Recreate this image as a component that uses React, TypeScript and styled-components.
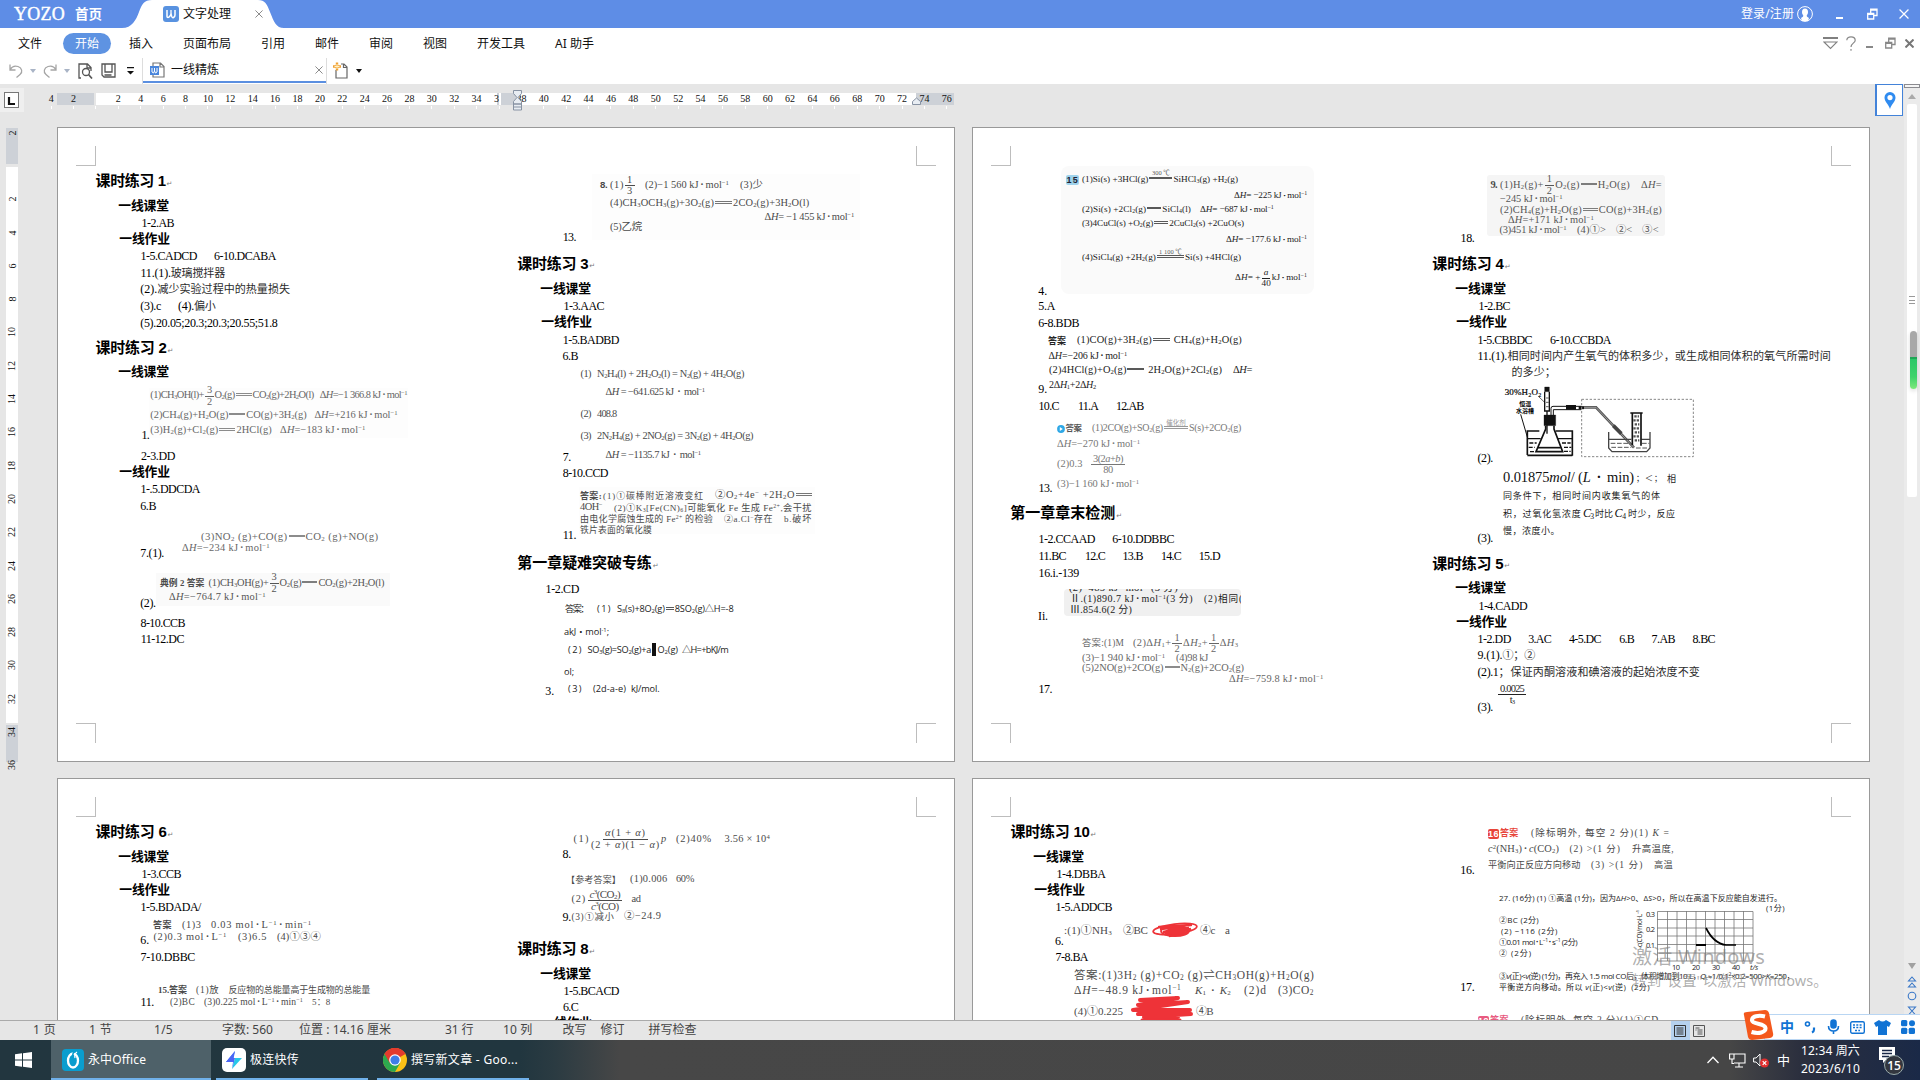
import React, { useLayoutEffect, useRef } from "react";
import styled, { createGlobalStyle, css } from "styled-components";

const SERIF = `"Liberation Serif", "Noto Sans CJK SC", serif`;
const SANS = `"Liberation Sans", "Noto Sans CJK SC", sans-serif`;
const UI = `"Noto Sans", "Noto Sans CJK SC", sans-serif`;

const Global = createGlobalStyle`
  * { box-sizing: border-box; }
  body { margin: 0; background: #e6e6e6; overflow: hidden; font-family: ${UI}; }
  svg { display: block; flex: none; }
`;

/* ---------- text set to a measured width ---------- */

const FitBox = styled.span<{ $w?: number }>`
  display: block;
  flex: none;
  white-space: pre;
  width: ${(p) => (p.$w ? `${p.$w}px` : "auto")};
`;

function Fit({ w, children, className }: { w?: number; children: React.ReactNode; className?: string }) {
  const ref = useRef<HTMLSpanElement>(null);
  useLayoutEffect(() => {
    const el = ref.current;
    if (!el || !w) return;
    el.style.letterSpacing = "0px";
    const base = el.getBoundingClientRect().width;
    el.style.letterSpacing = "1px";
    const slope = el.getBoundingClientRect().width - base;
    el.style.letterSpacing = slope > 0 ? `${(w - base) / slope}px` : "0px";
  }, [w]);
  return (
    <FitBox $w={w} className={className}>
      <span ref={ref}>{children}</span>
    </FitBox>
  );
}

/* ---------- formula markup: _x, ^{x}, *italic*, [num|den], ~width:label~ ---------- */

const Sub = styled.span`
  font-size: 0.64em;
  line-height: 0;
  vertical-align: -0.2em;
`;
const Sup = styled.span`
  font-size: 0.64em;
  line-height: 0;
  vertical-align: 0.5em;
`;
const Dot = styled.span`
  padding: 0 0.16em;
  font-weight: 700;
`;
const Han = styled.span`
  font-size: 0.92em;
  color: #2c2c2c;
`;
const Frac = styled.span`
  display: inline-flex;
  flex-direction: column;
  align-items: center;
  vertical-align: middle;
  line-height: 1em;
  margin: -10px 1px;
`;
const Num = styled.span`
  border-bottom: 1px solid currentColor;
  padding: 0 2px;
`;
const Bond = styled.span<{ $w: number }>`
  display: inline-block;
  position: relative;
  width: ${(p) => p.$w}px;
  height: 2.5px;
  margin: 0 1px;
  vertical-align: 2.5px;
  border-top: 1px solid currentColor;
  border-bottom: 1px solid currentColor;
  opacity: 0.75;
`;
const BondLabel = styled.span`
  position: absolute;
  left: 0;
  right: 0;
  bottom: 2px;
  text-align: center;
  font-size: 6.5px;
  line-height: 7px;
  letter-spacing: 0;
`;

function mark(src: string): React.ReactNode[] {
  const re = /_(.)|\^\{([^}]+)\}|\*([^*]+)\*|\[([^\]|]+)\|([^\]]+)\]|~(\d+)(?::([^~]*))?~|(·)/g;
  const out: React.ReactNode[] = [];
  let last = 0;
  let m: RegExpExecArray | null;
  while ((m = re.exec(src))) {
    if (m.index > last) out.push(src.slice(last, m.index));
    const k = m.index;
    if (m[1]) out.push(<Sub key={k}>{m[1]}</Sub>);
    else if (m[2]) out.push(<Sup key={k}>{m[2]}</Sup>);
    else if (m[3]) out.push(<i key={k}>{m[3]}</i>);
    else if (m[4])
      out.push(
        <Frac key={k}>
          <Num>{mark(m[4])}</Num>
          <span>{mark(m[5])}</span>
        </Frac>
      );
    else if (m[8]) out.push(<Dot key={k}>·</Dot>);
    else
      out.push(
        <Bond key={k} $w={+m[6]}>
          {m[7] ? <BondLabel>{m[7]}</BondLabel> : null}
        </Bond>
      );
    last = m.index + m[0].length;
  }
  if (last < src.length) out.push(src.slice(last));
  return out;
}

const bodyText = (src: string) =>
  src.split(/([\u2460-\u2473\u4e00-\u9fff，；]+)/).map((part, i) => (i % 2 ? <Han key={i}>{part}</Han> : part));

/* ---------- document lines ---------- */

type Style = { s?: number; c?: string; b?: boolean; f?: string; bg?: string; it?: boolean };
type TextItem = Style & { k: "t"; x: number; x2: number; text: string; body?: boolean };
type ScanItem = { k: "s"; x: number; x2: number; y: number; y2: number; bg?: string; r?: number; clip?: boolean; rows: LineDef[] };
type NodeItem = { k: "n"; x: number; x2: number; bottom: number; node: React.ReactNode };
type Item = TextItem | ScanItem | NodeItem;
type LineDef = { y: number; items: Item[] };

const Stack = styled.div`
  display: flex;
  flex-direction: column;
  min-width: 0;
`;
const Line = styled.div<{ $h: number }>`
  display: flex;
  flex: none;
  align-items: flex-end;
  height: ${(p) => p.$h}px;
`;
const Slot = styled.div<{ $ml: number; $w: number; $mb: number }>`
  flex: none;
  width: ${(p) => p.$w}px;
  margin-left: ${(p) => p.$ml}px;
  margin-bottom: ${(p) => p.$mb}px;
`;
const Ink = styled(Fit)<{ $s: number; $c: string; $b?: boolean; $f: string; $bg?: string; $it?: boolean }>`
  font: ${(p) => (p.$it ? "italic " : "")}${(p) => (p.$b ? 700 : 400)} ${(p) => p.$s}px/16px ${(p) => p.$f};
  color: ${(p) => p.$c};
  ${(p) =>
    p.$bg &&
    css`
      background: ${p.$bg};
      border-radius: 2px;
      line-height: ${p.$s + 1}px;
      margin-bottom: 2px;
    `}
`;
const Scan = styled.div<{ $w: number; $h: number; $bg: string; $r: number; $clip?: boolean }>`
  width: ${(p) => p.$w}px;
  height: ${(p) => p.$h}px;
  background: ${(p) => p.$bg};
  border-radius: ${(p) => p.$r}px;
  overflow: ${(p) => (p.$clip ? "hidden" : "visible")};
`;

function Lines({ x0, y0, rows }: { x0: number; y0: number; rows: LineDef[] }) {
  let prev = y0;
  return (
    <Stack>
      {rows.map((r, i) => {
        const bottom = r.y + 4;
        const h = bottom - prev;
        prev = bottom;
        let cx = x0;
        return (
          <Line key={i} $h={h}>
            {r.items.map((it, j) => {
              const ml = it.x - cx;
              const w = it.x2 - it.x;
              cx = it.x2;
              if (it.k === "t") {
                const s = it.s ?? 12;
                return (
                  <Slot key={j} $ml={ml} $w={w} $mb={s * 0.34 - 4}>
                    <Ink w={w} $s={s} $c={it.c ?? "#000"} $b={it.b} $f={it.f ?? SERIF} $bg={it.bg} $it={it.it}>
                      {it.body ? bodyText(it.text) : mark(it.text)}
                    </Ink>
                  </Slot>
                );
              }
              if (it.k === "s")
                return (
                  <Slot key={j} $ml={ml} $w={w} $mb={bottom - it.y2}>
                    <Scan $w={w} $h={it.y2 - it.y} $bg={it.bg ?? "transparent"} $r={it.r ?? 0} $clip={it.clip}>
                      <Lines x0={it.x} y0={it.y} rows={it.rows} />
                    </Scan>
                  </Slot>
                );
              return (
                <Slot key={j} $ml={ml} $w={w} $mb={bottom - it.bottom}>
                  {it.node}
                </Slot>
              );
            })}
          </Line>
        );
      })}
    </Stack>
  );
}

const B = (x: number, x2: number, text: string): TextItem => ({ k: "t", x, x2, text, body: true });
const row = (y: number, ...items: Item[]): LineDef => ({ y, items });
/* scanned print */
const P = (x: number, x2: number, text: string, o: Style = {}): TextItem => ({ k: "t", x, x2, text, s: 10.4, c: "#4a4a4a", ...o });
const D = "#777";
const scan = (x: number, y: number, x2: number, y2: number, rows: LineDef[], o: Partial<ScanItem> = {}): ScanItem => ({
  k: "s", x, y, x2, y2, rows, ...o,
});
const node = (x: number, x2: number, bottom: number, n: React.ReactNode): NodeItem => ({ k: "n", x, x2, bottom, node: n });
const H1 = (x: number, y: number, text: string, w: number): LineDef =>
  row(
    y,
    { k: "t", x, x2: x + w, text, s: 15, b: true, f: SANS },
    { k: "t", x: x + w + 1, x2: x + w + 6, text: "↵", s: 7, c: "#777", f: `"DejaVu Sans", sans-serif` }
  );
const H2 = (x: number, y: number, text: string): LineDef => row(y, { k: "t", x: x - 0.8, x2: x + 50, text, s: 12.8, b: true, f: SANS });

/* ---------- drawings inside the document ---------- */

const Apparatus = () => (
  <svg width="200" height="80" viewBox="300 790 600 240" fill="none" stroke="#111">
    <text x="314" y="826" fontSize="27" fontFamily="Liberation Serif" fill="#000" stroke="#000" strokeWidth=".6" textLength="110">30%H₂O₂</text>
    <text x="358" y="859" fontSize="18" fontWeight="700" fontFamily="Noto Sans CJK SC" fill="#000" stroke="none">恒温</text>
    <text x="348" y="880" fontSize="18" fontWeight="700" fontFamily="Noto Sans CJK SC" fill="#000" stroke="none">水浴槽</text>
    <path d="M362 884L382 952" strokeWidth="3" />
    <path d="M415 830L436 850" strokeWidth="2" />
    <path d="M434 802h14v14h-14z" fill="#111" />
    <path d="M434 816v58h14v-58M441 874v68" strokeWidth="4" />
    <path d="M438 835h8M438 848h8M438 861h8" strokeWidth="2" />
    <path d="M432 886h35v32h-35z" fill="#111" />
    <path d="M437 918v10L408 996h80L462 928v-10" strokeWidth="5" />
    <path d="M414 984h68" strokeWidth="5" />
    <path d="M453 888v-22q0-6 6-6h84" strokeWidth="3" />
    <path d="M460 888v-18h84" strokeWidth="3" />
    <path d="M498 863h30" strokeWidth="14" />
    <path d="M536 864h16" strokeWidth="9" />
    <path d="M382 934h36M467 934h50M382 932v74M517 932v76M382 1007h135" strokeWidth="5" />
    <path d="M384 957h38M474 957h42" strokeWidth="4" />
    <path d="M388 970h22M486 970h26M386 983h18M492 983h22M390 996h14M492 995h20" strokeWidth="4" strokeDasharray="12 4" />
    <path d="M545 839h335v172H545z" stroke="#888" strokeWidth="3" strokeDasharray="7 5" />
    <path d="M552 863h36L702 984" stroke="#555" strokeWidth="8" />
    <path d="M552 863h36L702 984" stroke="#bbb" strokeWidth="2" />
    <path d="M640 918l24 24" stroke="#444" strokeWidth="11" />
    <path d="M626 937v48l10 11h104l10-11v-48M626 959h68M724 959h25" stroke="#444" strokeWidth="4" />
    <path d="M632 971h60M726 971h22M634 983h60M708 985h36" stroke="#555" strokeWidth="3" strokeDasharray="14 5" />
    <path d="M691 880h37M697 880v96M723 880v98" strokeWidth="5" />
    <path d="M703 890h14M700 902h18M704 914h14M700 926h18M704 938h14M700 950h18M704 962h14" stroke="#555" strokeWidth="7" strokeDasharray="7 3" />
  </svg>
);

const Scribble = ({ tall }: { tall?: boolean }) =>
  tall ? (
    <svg width="64" height="24" viewBox="0 0 64 24" fill="none" stroke="#ee3338" strokeWidth="4" strokeLinecap="round" strokeLinejoin="round">
      <path d="M10 4L48 2L8 9L58 6L3 14L60 14L8 18L61 18L14 21L48 21" />
      <path d="M12 24h38" strokeWidth="3" />
    </svg>
  ) : (
    <svg width="48" height="18" viewBox="0 0 48 18" fill="none" stroke="#ee3338" strokeWidth="1.800" strokeLinecap="round">
      <ellipse cx="24" cy="8" rx="22" ry="5" transform="rotate(-7 24 8)" />
      <path d="M10 8L34 5L12 11L38 7L14 13L40 8L18 15L36 12M8 6L40 4" strokeWidth="2.300" />
      <ellipse cx="24" cy="10" rx="14" ry="5" />
    </svg>
  );

const Chart = () => (
  <svg width="104" height="62" viewBox="1649 909 104 62" fill="none">
    <path d="M1657.500 911.500H1753V961H1657.500zM1667.500 911v50M1677 911v50M1686.500 911v50M1696 911v50M1705.500 911v50M1715 911v50M1724.500 911v50M1734 911v50M1743.500 911v50M1657 919.500h96M1657 928h96M1657 936h96M1657 944.500h96M1657 953h96" stroke="#777" strokeWidth=".8" />
    <path d="M1696 945h10" stroke="#000" strokeWidth="2" />
    <path d="M1706 928c4 8 11 16 20 17h10" stroke="#000" strokeWidth="1.700" />
    <g fontFamily="Open Sans" fontSize="7.500" fill="#222">
      <text x="1646" y="917" textLength="9">0.3</text>
      <text x="1646" y="932" textLength="9">0.2</text>
      <text x="1646" y="948" textLength="9">0.1</text>
      <text x="1672" y="969.500" textLength="8">10</text>
      <text x="1692" y="969.500" textLength="8">20</text>
      <text x="1712" y="969.500" textLength="8">30</text>
      <text x="1732" y="969.500" textLength="8">40</text>
      <text x="1750" y="969.500" fontStyle="italic">t/s</text>
      <text transform="translate(1642 947) rotate(-90)" fontSize="6.500" textLength="37">c(CO)/mol·L⁻¹</text>
    </g>
  </svg>
);
const ChartBox = styled.div`
  svg { overflow: visible; }
`;
const PlayDot = () => (
  <svg width="8" height="8" viewBox="0 0 8 8">
    <circle cx="4" cy="4" r="3.900" fill="#2fa8e6" />
    <path d="M2.800 2l3 2-3 2z" fill="#fff" />
  </svg>
);
const CursorBlock = styled.div`
  width: 4px;
  height: 13px;
  background: #111;
`;

/* ---------- page contents ---------- */

const SM = { f: `"Open Sans", "Noto Sans CJK SC", sans-serif`, s: 8, c: "#222" };
const HAND = { f: `"Open Sans", "Noto Sans CJK SC", sans-serif`, s: 9.2, c: "#222" };
const KAI = { s: 9, c: "#222", f: SANS };
const RED = "#e8443a";
const INK = { s: 9.2, c: "#222" };

const p1a = [
  H1(95.6, 186, "课时练习 1", 70),
  H2(119, 210.5, "一线课堂"),
  row(227, B(141.5, 174, "1-2.AB")),
  H2(120, 243.5, "一线作业"),
  row(260, B(140.5, 197, "1-5.CADCD"), B(214, 276, "6-10.DCABA")),
  row(277, B(140.5, 225, "11.(1).玻璃搅拌器")),
  row(293.5, B(140.3, 290, "(2).减少实验过程中的热量损失")),
  row(310, B(140.3, 161, "(3).c"), B(178, 215.5, "(4).偏小")),
  row(327, B(140.3, 277.5, "(5).20.05;20.3;20.3;20.55;51.8")),
  H1(95.6, 353.5, "课时练习 2", 71),
  H2(119, 376.5, "一线课堂"),
  row(
    439,
    B(141.5, 149, "1."),
    scan(149, 388, 408, 438, [
      row(399, P(150.3, 407, "(1)CH_3OH(l)+[3|2]O_2(g)~16~CO_2(g)+2H_2O(l)   Δ*H*=−1 366.8 kJ·mol^{−1}", { c: "#666" })),
      row(418.5, P(150.3, 397.5, "(2)CH_4(g)+H_2O(g)~16~CO(g)+3H_2(g)   Δ*H*=+216 kJ·mol^{−1}", { c: "#666" })),
      row(433.7, P(150.3, 365.5, "(3)H_2(g)+Cl_2(g)~16~2HCl(g)   Δ*H*=−183 kJ·mol^{−1}", { c: "#666" })),
    ], { bg: "#fdfdfd" })
  ),
  row(460, B(141, 175, "2-3.DD")),
  H2(120, 476.5, "一线作业"),
  row(493, B(140.5, 200, "1-.5.DDCDA")),
  row(510, B(140.3, 156, "6.B")),
  row(
    557,
    B(140.3, 164, "7.(1)."),
    scan(182, 525, 386, 556, [
      row(539.3, P(201, 378.5, "(3)NO_2 (g)+CO(g)~16~CO_2 (g)+NO(g)", { c: "#666", s: 10.800 })),
      row(551.3, P(182, 270, "Δ*H*=−234 kJ·mol^{−1}", { c: "#666" })),
    ])
  ),
  row(
    607,
    B(140.3, 155.5, "(2)."),
    scan(156, 573, 390, 606, [
      row(586.3, P(160, 204.500, "典例 2 答案", { b: true, s: 8.800 }), P(208.5, 384.3, "(1)CH_3OH(g)+[3|2]O_2(g)~15~CO_2(g)+2H_2O(l)", { c: "#555" })),
      row(601, P(169, 266, "Δ*H*=−764.7 kJ·mol^{−1}", { c: "#555" })),
    ], { bg: "#fafafa" })
  ),
  row(627, B(140.5, 185, "8-10.CCB")),
  row(643, B(140.8, 184, "11-12.DC")),
];

const p1b = [
  row(
    240.7,
    B(562.7, 576, "13."),
    scan(592, 174, 860, 240, [
      row(188.7, P(600, 607.5, "8.", { b: true, f: SANS, s: 9.600 }), P(610, 636, "(1)[1|3]"), P(645, 729, "(2)−1 560 kJ·mol^{−1}"), P(740, 763, "(3)少")),
      row(206.7, P(610, 809.5, "(4)CH_3OCH_3(g)+3O_2(g)~17~2CO_2(g)+3H_2O(l)")),
      row(220.3, P(764.5, 854, "Δ*H*= −1 455 kJ·mol^{−1}")),
      row(230.7, P(610, 642, "(5)乙烷")),
    ], { bg: "#fdfdfd" })
  ),
  H1(517.3, 268.7, "课时练习 3", 71),
  H2(541, 293.3, "一线课堂"),
  row(310, B(563.5, 604, "1-3.AAC")),
  H2(542, 326.3, "一线作业"),
  row(343.7, B(562.7, 619, "1-5.BADBD")),
  row(360, B(562.5, 578, "6.B")),
  row(
    461,
    B(562.7, 571, "7."),
    scan(580.5, 364, 760, 461, [
      row(377.3, P(580.5, 591, "(1)"), P(597, 744, "N_2H_4(l) + 2H_2O_2(l) = N_2(g) + 4H_2O(g)")),
      row(395.7, P(605.5, 704.5, "Δ*H* = −641.625 kJ · mol^{−1}")),
      row(417.7, P(580.5, 591, "(2)"), P(597, 616.500, "408.8")),
      row(440, P(580.5, 591, "(3)"), P(597, 753, "2N_2H_4(g) + 2NO_2(g) = 3N_2(g) + 4H_2O(g)")),
      row(458.3, P(605.5, 700.5, "Δ*H* = −1135.7 kJ · mol^{−1}")),
    ])
  ),
  row(477, B(562.7, 608, "8-10.CCD")),
  row(
    539,
    B(562.7, 576, "11."),
    scan(579, 487, 815, 534, [
      row(499, P(580, 602, "答案:", { b: true, s: 9 }), P(603, 704, "(1)①碳棒附近溶液变红", { s: 8.8 }), P(715, 813, "②O_2+4e^{−} +2H_2O~16~")),
      row(511, P(580, 602, "4OH^{−}"), P(614, 812, "(2)①K_3[Fe(CN)_6]可能氧化 Fe 生成 Fe^{2+},会干扰", { s: 9.2 })),
      row(522.3, P(580, 713, "由电化学腐蚀生成的 Fe^{2+} 的检验", { s: 9 }), P(724, 773, "②a.Cl^{−}存在", { s: 9 }), P(784, 812, "b.破坏", { s: 9 })),
      row(533, P(580, 652, "铁片表面的氧化膜", { s: 8.8 })),
    ], { bg: "#fdfdfd" })
  ),
  H1(517.3, 568.5, "第一章疑难突破专练", 134.5),
  row(592.7, B(545.6, 579, "1-2.CD")),
  row(
    695,
    B(545.3, 554, "3."),
    scan(564, 598, 735, 697, [
      row(612.7, P(565, 588, "答案：", HAND), P(597, 612, "(1)", HAND), P(617, 733.5, "S_8(s)+8O_2(g)~8~8SO_2(g)△H=-8", HAND)),
      row(635.7, P(564, 609, "akJ・mol^{-1};", HAND)),
      row(653, P(568, 583, "(2)", HAND), P(587.500, 651, "SO_3(g)=SO_2(g)+a", HAND), node(652, 656, 656, <CursorBlock />), P(657.500, 678, "O_2(g)", HAND), P(682, 728, "△H=+bKJ/m", HAND)),
      row(675, P(564, 574, "ol;", HAND)),
      row(692, P(568, 583, "(3)", HAND), P(593, 626, "(2d-a-e)", HAND), P(631, 659.500, "kJ/mol.", HAND)),
    ])
  ),
];

const p2a = [
  row(
    295,
    B(1038.3, 1047, "4."),
    scan(1061, 166, 1314, 294, [
      row(181.7, { k: "t", x: 1066.5, x2: 1079, text: "15", s: 9, b: true, f: SANS, c: "#223", bg: "#9fd3ec" }, P(1082, 1238, "(1)Si(s) +3HCl(g)~23:300 ℃~SiHCl_3(g) +H_2(g)", INK)),
      row(197.7, P(1234, 1307, "Δ*H*= −225 kJ·mol^{−1}", INK)),
      row(212, P(1082, 1191, "(2)Si(s) +2Cl_2(g)~14~SiCl_4(l)", INK), P(1200, 1273.500, "Δ*H*= −687 kJ·mol^{−1}", INK)),
      row(226.3, P(1082, 1244, "(3)4CuCl(s) +O_2(g)~14~2CuCl_2(s) +2CuO(s)", INK)),
      row(242, P(1226, 1307, "Δ*H*= −177.6 kJ·mol^{−1}", INK)),
      row(260.3, P(1082, 1241, "(4)SiCl_4(g) +2H_2(g)~27:1 100 ℃~Si(s) +4HCl(g)", INK)),
      row(280.3, P(1235, 1307, "Δ*H*= +[*a*|40]kJ·mol^{−1}", INK)),
    ], { bg: "#fafafa", r: 8 })
  ),
  row(310, B(1038.3, 1055, "5.A")),
  row(326.7, B(1038.3, 1079, "6-8.BDB")),
  row(
    393,
    B(1038.3, 1047, "9."),
    scan(1048, 330, 1255, 392, [
      row(343.7, P(1048, 1066, "答案", { b: true, s: 9, c: "#222" }), P(1077, 1242, "(1)CO(g)+3H_2(g)~17~ CH_4(g)+H_2O(g)", { c: "#222" })),
      row(359, P(1048.5, 1127, "Δ*H*=−206 kJ·mol^{−1}", { c: "#222", s: 10 })),
      row(373.3, P(1049, 1222, "(2)4HCl(g)+O_2(g)~17~ 2H_2O(g)+2Cl_2(g)", { c: "#222" }), P(1233, 1252, "Δ*H*=", { c: "#222" })),
      row(388.3, P(1049, 1096, "2Δ*H*_1+2Δ*H*_2", { c: "#222", s: 10 })),
    ])
  ),
  row(410, B(1038.5, 1059, "10.C"), B(1078, 1098, "11.A"), B(1116, 1143.5, "12.AB")),
  row(
    492,
    B(1038.5, 1052, "13."),
    scan(1057, 415, 1245, 491, [
      row(431.7, node(1057, 1065, 433, <PlayDot />), P(1065.5, 1081.5, "答案", { b: true, s: 8.4, c: "#555" }), P(1092, 1241, "(1)2CO(g)+SO_2(g)~24:催化剂~S(s)+2CO_2(g)", { c: D, s: 10 })),
      row(447.3, P(1057, 1140, "Δ*H*=−270 kJ·mol^{−1}", { c: D })),
      row(467.7, P(1057, 1082.500, "(2)0.3", { c: D }), P(1090, 1126, "[3(2*a*+*b*)|80]", { c: D })),
      row(487.3, P(1057, 1139, "(3)−1 160 kJ·mol^{−1}", { c: D })),
    ])
  ),
  H1(1010.3, 518.5, "第一章章末检测", 105),
  row(542.7, B(1038.5, 1095, "1-2.CCAAD"), B(1112.3, 1174, "6-10.DDBBC")),
  row(560, B(1038.500, 1066, "11.BC"), B(1085, 1105, "12.C"), B(1122.5, 1143, "13.B"), B(1161, 1181, "14.C"), B(1198.700, 1220, "15.D")),
  row(577, B(1038.5, 1079, "16.i.-139")),
  row(
    620,
    B(1038, 1048, "Ii."),
    scan(1064, 589, 1241, 616, [
      row(591.5, P(1069, 1178, "(2)−485 kJ·mol^{−1}(3 分)", { c: "#222" })),
      row(602.3, P(1070, 1193, "Ⅱ.(1)890.7 kJ·mol^{−1}(3 分)", { c: "#222", s: 10 }), P(1204, 1243, "(2)相同(", { c: "#222", s: 9.6 })),
      row(613.7, P(1070, 1132, "Ⅲ.854.6(2 分)", { c: "#222", s: 10 })),
    ], { bg: "#f0f0f0", r: 4, clip: true })
  ),
  row(
    693,
    B(1038.5, 1052, "17."),
    scan(1070, 633, 1335, 686, [
      row(646.7, P(1082, 1124, "答案:(1)M", { c: "#666", s: 9.4 }), P(1133, 1238.5, "(2)Δ*H*_1+[1|2]Δ*H*_2+[1|2]Δ*H*_3", { c: "#666" })),
      row(661.7, P(1082, 1165, "(3)−1 940 kJ·mol^{−1}", { c: "#666" }), P(1176, 1208, "(4)98 kJ", { c: "#666" })),
      row(671.3, P(1082, 1244, "(5)2NO(g)+2CO(g)~15~N_2(g)+2CO_2(g)", { c: "#666" })),
      row(682.7, P(1229, 1323.500, "Δ*H*=−759.8 kJ·mol^{−1}", { c: "#666" })),
    ])
  ),
];

const p2b = [
  row(
    241.7,
    B(1460.5, 1474.500, "18."),
    scan(1487, 175, 1665, 236, [
      row(188.3, P(1490.5, 1497, "9.", { b: true }), P(1500, 1630, "(1)H_2(g)+[1|2]O_2(g)~16~H_2O(g)", { c: "#555" }), P(1641, 1662, "Δ*H*=", { c: "#555" })),
      row(203, P(1500, 1562.5, "−245 kJ·mol^{−1}", { c: "#555" })),
      row(213.7, P(1500, 1662, "(2)CH_4(g)+H_2O(g)~15~CO(g)+3H_2(g)", { c: "#555" })),
      row(224, P(1508, 1594, "Δ*H*=+171 kJ·mol^{−1}", { c: "#555" })),
      row(234, P(1499.5, 1566.5, "(3)451 kJ·mol^{−1}", { c: "#555" }), P(1577, 1606, "(4)①>", { c: "#555" }), P(1616, 1632, "②<", { c: "#555" }), P(1642, 1659, "③<", { c: "#555" })),
    ], { bg: "#f5f5f5", r: 3 })
  ),
  H1(1432.3, 269, "课时练习 4", 71.5),
  H2(1456, 293.5, "一线课堂"),
  row(310, B(1478.5, 1510, "1-2.BC")),
  H2(1457, 326.5, "一线作业"),
  row(344, B(1477.5, 1532, "1-5.CBBDC"), B(1550, 1611, "6-10.CCBDA")),
  row(360, B(1477.5, 1507, "11.(1)."), B(1507.5, 1831, "相同时间内产生氧气的体积多少，或生成相同体积的氧气所需时间")),
  row(376, B(1511.5, 1556, "的多少；")),
  row(462.3, B(1477.5, 1493, "(2)."), node(1500, 1700, 463.3, <Apparatus />)),
  row(
    542.3,
    B(1477.5, 1493, "(3)."),
    scan(1503, 468, 1680, 541, [
      row(482, P(1503, 1634, "0.01875*mol*/ (*L* · min)", { s: 14.500, c: "#111" }), P(1636, 1663, "；＜；", { s: 8, c: "#333" }), P(1667, 1675.500, "相", KAI)),
      row(499, P(1503, 1661, "同条件下，相同时间内收集氧气的体", KAI)),
      row(516.7, P(1503, 1581.5, "积，过氧化氢浓度", KAI), P(1583, 1593.5, "*C*_3", { s: 12, c: "#111" }), P(1595, 1613, "时比", KAI), P(1614.5, 1626, "*C*_4", { s: 12, c: "#111" }), P(1628, 1675.5, "时少，反应", KAI)),
      row(534, P(1503, 1560, "慢，浓度小。", KAI)),
    ])
  ),
  H1(1432.3, 568.7, "课时练习 5", 71),
  H2(1456, 592.7, "一线课堂"),
  row(610, B(1478.5, 1527, "1-4.CADD")),
  H2(1457, 626.7, "一线作业"),
  row(643, B(1477.500, 1511, "1-2.DD"), B(1528.300, 1551, "3.AC"), B(1569, 1601, "4-5.DC"), B(1619.2, 1634, "6.B"), B(1651.500, 1675, "7.AB"), B(1692.500, 1715, "8.BC")),
  row(659.5, B(1477.5, 1535, "9.(1).①；②")),
  row(676, B(1477.5, 1509, "(2).1；"), B(1510.500, 1700, "保证丙酮溶液和碘溶液的起始浓度不变")),
  row(710.7, B(1477.500, 1493, "(3)."), scan(1497, 682, 1530, 711, [row(698, P(1497, 1527, "[0.0025|t_3]", { s: 10.500, c: "#222" }))])),
];

const p3a = [
  H1(95.6, 837.2, "课时练习 6", 71),
  H2(119, 861.5, "一线课堂"),
  row(878, B(141.5, 181, "1-3.CCB")),
  H2(120, 894.5, "一线作业"),
  row(911, B(140.5, 201, "1-5.BDADA/")),
  row(
    943.7,
    B(140.3, 149, "6."),
    scan(153, 916, 325, 943, [
      row(928.3, P(153, 172, "答案", { b: true, s: 9 }), P(182, 201.500, "(1)3"), P(211, 312, "0.03 mol·L^{−1}·min^{−1}")),
      row(940.7, P(153.5, 227, "(2)0.3 mol·L^{−1}"), P(238, 267, "(3)6.5"), P(277, 321, "(4)①③④")),
    ])
  ),
  row(961, B(140.500, 195, "7-10.DBBC")),
  row(
    1006.5,
    B(140.500, 154, "11."),
    scan(157, 980, 372, 1010, [
      row(993, P(158, 187, "15.答案", { b: true, s: 9 }), P(196, 219.5, "(1)放", { s: 9.4 }), P(228.5, 370, "反应物的总能量高于生成物的总能量", { s: 9 })),
      row(1005, P(170, 195, "(2)BC", { s: 9.4 }), P(204, 303, "(3)0.225 mol·L^{−1}·min^{−1}", { s: 9.6 }), P(312, 330.5, "5：8", { s: 9 })),
    ])
  ),
];

const p3b = [
  row(
    857.7,
    B(562.5, 571, "8."),
    scan(573, 822, 775, 857, [
      row(842.3, P(573.5, 590, "(1)"), P(590, 661, "[*α*(1 + *α*)|(2 + *α*)(1 − *α*)]"), P(661, 665.5, "*p*"), P(676, 712, "(2)40%"), P(724.5, 770, "3.56 × 10^{4}")),
    ])
  ),
  row(
    921,
    B(562.5, 571, "9."),
    scan(571, 870, 720, 921, [
      row(882.7, P(566, 621, "【参考答案】", { s: 9 }), P(630, 667.5, "(1)0.006"), P(676, 694, "60%")),
      row(902.7, P(571.5, 586, "(2)"), P(586.5, 623, "[*c*^{3}(CO_2)|*c*^{3}(CO)]", { s: 11 }), P(631.5, 640.5, "ad")),
      row(920, P(571.5, 614.500, "(3)①减小", { s: 9.4 }), P(624, 661.5, "②−24.9")),
    ])
  ),
  H1(517.3, 954, "课时练习 8", 71),
  H2(541, 978.3, "一线课堂"),
  row(995, B(563.5, 619, "1-5.BCACD")),
  row(1011, B(563, 578, "6.C")),
  H2(542, 1027.500, "一线作业"),
];

const p4a = [
  H1(1010.6, 837.2, "课时练习 10", 79),
  H2(1034, 861.5, "一线课堂"),
  row(878, B(1056.5, 1105.5, "1-4.DBBA")),
  H2(1035, 894.5, "一线作业"),
  row(911, B(1055.5, 1112, "1-5.ADDCB")),
  row(
    945,
    B(1055, 1063.5, "6."),
    scan(1064, 918, 1240, 944, [
      row(934, P(1064, 1112, ":(1)①NH_3", { s: 11 }), P(1123, 1147.500, "②BC", { s: 11 }), node(1151, 1199, 939, <Scribble />), P(1200, 1215, "④c", { s: 11 }), P(1225, 1231, "a", { s: 11 })),
    ])
  ),
  row(961, B(1055.500, 1088, "7-8.BA")),
  row(
    1031,
    B(1055.500, 1064, "9."),
    scan(1072, 966, 1320, 1030, [
      row(979.3, P(1074, 1314.5, "答案:(1)3H_2 (g)+CO_2 (g)⇌CH_3OH(g)+H_2O(g)", { s: 11.500 })),
      row(994, P(1074, 1181.5, "Δ*H*=−48.9 kJ·mol^{−1}", { s: 11.500 }), P(1195, 1231, "*K*_1 · *K*_2", { s: 11 }), P(1244, 1267, "(2)d", { s: 11.500 }), P(1278, 1314, "(3)CO_2", { s: 11.500 })),
      row(1014.3, P(1074, 1123, "(4)①0.225", { s: 11 }), node(1130, 1194, 1020.5, <Scribble tall />), P(1196, 1213, "④B", { s: 11 })),
    ])
  ),
];

const V = (x: number, x2: number, text: string) => P(x, x2, text, SM);
const p4b = [
  row(
    874,
    B(1460.3, 1474.5, "16."),
    scan(1488, 824, 1680, 873, [
      row(836.3, { k: "t", x: 1488, x2: 1499, text: "16", s: 9, b: true, f: SANS, c: "#fff", bg: RED }, P(1500, 1518.5, "答案", { b: true, s: 9, c: RED }), P(1531, 1670, "(除标明外, 每空 2 分)(1) *K* =", { s: 9.6 })),
      row(852.3, P(1488, 1559, "*c*^{2}(NH_3)·*c*(CO_2)"), P(1569.5, 1621, "(2) >(1 分)", { s: 9.6 }), P(1632, 1674, "升高温度,", { s: 9.4 })),
      row(868, P(1488, 1580.5, "平衡向正反应方向移动", { s: 9.2 }), P(1591, 1643.5, "(3) >(1 分)", { s: 9.6 }), P(1654, 1673, "高温", { s: 9.2 })),
    ])
  ),
  row(
    991,
    B(1460.3, 1474.5, "17."),
    scan(1495, 890, 1810, 993, [
      row(900.3, V(1499, 1782, "27. (16分) (1) ①高温 (1分)，因为Δ*H*>0、Δ*S*>0，所以在高温下反应能自发进行。")),
      row(910.5, V(1766, 1785, "(1分)")),
      row(922.3, V(1499, 1539, "②BC (2分)")),
      row(933.5, V(1501, 1558, "(2) −116 (2分)")),
      row(945, V(1499, 1577, "①0.01 mol·L^{−1}·s^{−1} (2分)")),
      row(956, V(1499, 1532, "② (2分)"), node(1649, 1753, 971, <ChartBox><Chart /></ChartBox>)),
      row(978.7, V(1499, 1794, "③*v*(正)<*v*(逆) (1分)，再充入 1.5 mol CO后，体积增加到10 L，*Q*_c=1/0.1^{2}×0.2=500>*K*=250，")),
      row(989.5, V(1499, 1650, "平衡逆方向移动。所以 *v*(正)<*v*(逆)  (2分)")),
    ])
  ),
  row(1023, { k: "t", x: 1478, x2: 1489, text: "19", s: 9, b: true, f: SANS, c: "#fff", bg: "#e85a80" }, P(1490, 1509, "答案", { b: true, s: 9, c: "#e85a80" }), P(1521, 1659, "(除标明外, 每空 2 分)(1)①CD", { s: 9.6 })),
];

/* ---------- page sheets ---------- */

const Sheets = styled.div`
  display: grid;
  grid-template-columns: 898px 898px;
  grid-auto-rows: 635px;
  column-gap: 17px;
  row-gap: 16px;
  padding: 15px 0 0 33px;
`;
const Sheet = styled.article`
  position: relative;
  display: grid;
  grid-template-columns: 422px 1fr;
  padding-left: 37px;
  background: #fff;
  border: 1px solid #999;
`;
const Corner = styled.i<{ $r?: boolean; $b?: boolean }>`
  position: absolute;
  width: 20px;
  height: 20px;
  border: 0 solid #bdbdbd;
  ${(p) => (p.$r ? "right: 18px; border-left-width: 1px;" : "left: 18px; border-right-width: 1px;")}
  ${(p) => (p.$b ? "bottom: 18px; border-top-width: 1px;" : "top: 18px; border-bottom-width: 1px;")}
`;
function SheetView({ x, y, left, right }: { x: number; y: number; left: LineDef[]; right: LineDef[] }) {
  return (
    <Sheet>
      <Corner />
      <Corner $r />
      <Corner $b />
      <Corner $r $b />
      <Lines x0={x + 38} y0={y + 1} rows={left} />
      <Lines x0={x + 460} y0={y + 1} rows={right} />
    </Sheet>
  );
}

/* ---------- window chrome ---------- */

const Screen = styled.div`
  width: 1920px;
  height: 1080px;
  display: grid;
  grid-template-rows: 28px 30px 26px 936px 20px 40px;
  background: #e6e6e6;
  overflow: hidden;
`;
const Gap = styled.span<{ $w: number }>`
  flex: none;
  width: ${(p) => p.$w}px;
`;
const Grow = styled.span`
  flex: 1;
`;

const TitleBar = styled.header`
  display: flex;
  align-items: center;
  background: #5e8de6;
  color: #fff;
`;
const Brand = styled(Fit)`
  font: 400 18px/28px ${SERIF};
  -webkit-text-stroke: 0.4px #fff;
`;
const HomeLabel = styled(Fit)`
  font: 700 13.500px/26px ${UI};
`;
const AppTab = styled.div`
  display: flex;
  align-items: center;
  width: 162px;
  height: 28px;
  margin-left: 20px;
  padding-left: 41px;
  color: #111;
  font-size: 12px;
  background: #fff;
  clip-path: path("M0 28C10 28 14 20 17 12C20 4 22 0 30 0H136C143 0 145 4 148 12C152 22 154 28 162 28Z");
`;
const UIText = styled(Fit)<{ $c?: string; $s?: number }>`
  color: ${(p) => p.$c ?? "#111"};
  font-size: ${(p) => p.$s ?? 12}px;
  line-height: 18px;
`;

const MenuBar = styled.nav`
  display: flex;
  align-items: center;
  background: #fff;
`;
const MenuItem = styled.span<{ $ml: number; $on?: boolean }>`
  margin-left: ${(p) => p.$ml}px;
  padding-top: 2px;
  height: 21px;
  ${(p) =>
    p.$on &&
    css`
      padding: 2px 12px 0;
      border-radius: 11px;
      background: #5e93e2;
    `}
`;
const ToolBar = styled.div`
  display: flex;
  align-items: center;
  padding-bottom: 1px;
  background: #fff;
`;
const DocTab = styled.div`
  display: flex;
  align-items: center;
  align-self: flex-start;
  width: 185px;
  height: 26px;
  padding: 0 3px 3px 7px;
  border-left: 1px solid #ddd;
  border-right: 1px solid #ddd;
  background: linear-gradient(#5b8fe0, #5b8fe0) 0 23px / 100% 2px no-repeat;
`;

const Workspace = styled.main`
  position: relative;
  display: grid;
  grid-template-columns: 24px 1851px 29px 16px;
  grid-template-rows: 28px 908px;
  overflow: hidden;
`;
const TabCorner = styled.div`
  display: flex;
  align-items: center;
  padding-left: 4px;
  height: 24px;
  margin-top: 4px;
  background: #efefef;
`;
const HRuler = styled.div`
  position: relative;
  display: flex;
  margin-left: 16px;
  height: 25px;
  align-items: flex-start;
  padding-top: 9px;
  background:
    linear-gradient(90deg, #cdd1d7 37px, #e6e6e6 37px 39px, #fff 39px 440px, #cdd1d7 440px 442px, #fff 442px 444px, #cdd1d7 444px 464px, #fff 464px 859px, #cdd1d7 859px)
    17px 9px / 897px 12px no-repeat;
`;
const HCell = styled.span`
  flex: none;
  width: 22.4px;
  height: 16px;
  text-align: center;
  font: 10px/12px ${SERIF};
  color: #111;
  background: linear-gradient(#fff, #fff) 50% 13px / 1px 3px no-repeat;
`;
const IndentMark = styled.div<{ $x: number; $y: number }>`
  position: absolute;
  left: ${(p) => p.$x}px;
  top: ${(p) => p.$y}px;
`;
const Canvas = styled.div`
  overflow: hidden;
  height: 908px;
`;
const VRuler = styled.div`
  width: 12px;
  height: 660px;
  margin-left: 6px;
  padding-top: 4px;
  background:
    linear-gradient(#cdd1d7 36px, #e6e6e6 36px 39px, #fff 39px 595px, #e6e6e6 595px 597px, #cdd1d7 597px) 0 16px / 12px 634px no-repeat;
`;
const VCell = styled.div`
  display: flex;
  align-items: center;
  justify-content: center;
  height: 33.300px;
  span {
    transform: rotate(-90deg);
    font: 10px/12px ${SERIF};
    color: #111;
  }
`;
const PinButton = styled.div`
  display: flex;
  align-items: center;
  justify-content: center;
  width: 28px;
  height: 32px;
  background: #fff;
  border: 1px solid #4383d9;
  border-left-width: 2px;
`;
const ScrollCol = styled.div`
  grid-column: 4;
  grid-row: 1 / 3;
  display: flex;
  flex-direction: column;
  align-items: center;
  background: #ebebeb;
`;
const Split = styled.div`
  width: 16px;
  height: 4px;
  border: 1px solid #8b8b90;
  background: #f6f6f6;
`;
const Thumb = styled.div`
  position: relative;
  width: 10px;
  height: 393px;
  background: #fff;
  border-radius: 2px;
`;
const Grip = styled.div`
  position: absolute;
  left: 2px;
  top: 192px;
  width: 6px;
  height: 9px;
  background: repeating-linear-gradient(#999 0 1px, transparent 1px 3.500px);
`;
const SpeedPill = styled.div`
  position: absolute;
  left: 3px;
  top: 227px;
  width: 7px;
  height: 58px;
  border-radius: 4px;
  background: linear-gradient(#a8a8a8 26px, #1fa656 26px 28px, #2bc768 28px, #3fd36a 46px, #7ee87c);
  box-shadow: 0 2px 4px #0002;
`;
const Watermark = styled.div`
  position: absolute;
  left: 1632px;
  top: 860px;
  display: flex;
  flex-direction: column;
  color: rgba(125, 125, 125, 0.62);
`;
const WaterBig = styled(Fit)`
  font: 20px/26px ${UI};
`;
const WaterSmall = styled(Fit)`
  font: 14.500px/20px ${UI};
`;

const StatusBar = styled.footer`
  position: relative;
  display: flex;
  align-items: center;
  background: #e6e6e6;
  border-top: 1px solid #aaa;
`;
const StatusText = styled(UIText)`
  margin-top: -2px;
`;
const ViewButton = styled.div<{ $on?: boolean }>`
  display: flex;
  align-items: center;
  justify-content: center;
  width: 19px;
  height: 19px;
  background: ${(p) => (p.$on ? "#b5d1ee" : "transparent")};
`;
const ImeBar = styled.div`
  position: absolute;
  z-index: 1;
  left: 1742px;
  top: -11px;
  display: flex;
  align-items: center;
  height: 30px;
`;
const ImeLogo = styled.svg`
  position: relative;
  z-index: 1;
`;
const ImeTray = styled.div`
  display: flex;
  align-items: center;
  justify-content: space-between;
  width: 156px;
  height: 26px;
  margin: 4px 0 0 -10px;
  padding: 0 5px 0 15px;
  background: #fff;
  border: 1px solid #b9d6f3;
  border-right: 0;
`;
const ImeGlyph = styled.span`
  color: #1173d4;
  font: 700 14px/16px ${UI};
`;

const TaskBar = styled.footer`
  display: flex;
  align-items: stretch;
  background: linear-gradient(90deg, #22363f 0, #21363f 520px, #2b3b42 555px, #474747 620px, #464646 1730px, #2b2f3e 1800px, #1a2947 1920px);
  color: #fff;
`;
const Start = styled.div`
  display: flex;
  align-items: center;
  padding-left: 15px;
  width: 51px;
`;
const Task = styled.div<{ $w: number; $on?: boolean; $ml?: number }>`
  display: flex;
  align-items: center;
  gap: 4px;
  width: ${(p) => p.$w}px;
  margin-left: ${(p) => p.$ml ?? 0}px;
  padding-top: 2px;
  padding-left: ${(p) => (p.$on ? 11 : 6)}px;
  background: ${(p) => (p.$on ? "#4e6169" : "transparent")};
  border-bottom: 2px solid #70b1ea;
`;
const Clock = styled.div`
  display: flex;
  flex-direction: column;
  justify-content: center;
  padding-bottom: 1px;
`;
const Tray = styled.div`
  display: flex;
  align-items: center;
`;

const Caret = ({ c }: { c: string }) => (
  <svg width="6" height="4" viewBox="0 0 6 4"><path d="M0 0h6L3 4z" fill={c} /></svg>
);
const WBadge = ({ s }: { s: number }) => (
  <svg width={s} height={s} viewBox="0 0 16 16">
    <rect width="16" height="16" rx="3" fill="#5892e0" />
    <path d="M4 4v6.500q0 1 1 1 1 0 1.500-.8L8 8.500l1 2.500q.5 1 1.500.5Q12 10.800 12 9V4" fill="none" stroke="#fff" strokeWidth="1.500" />
    <path d="M8 4v5" stroke="#fff" strokeWidth="1.300" />
  </svg>
);
const Restore = ({ c }: { c: string }) => (
  <svg width="11" height="12" viewBox="0 0 11 12" fill="none" stroke={c} strokeWidth="1.300">
    <path d="M.7 5.500h6v5.500h-6zM.7 6.300h6M3.700 5V1.200h6.300V7.500H7M3.700 2h6.300" />
  </svg>
);
const Cross = ({ c, s = 9, w = 1.100 }: { c: string; s?: number; w?: number }) => (
  <svg width={s} height={s} viewBox="0 0 9 9" stroke={c} strokeWidth={w}><path d="M.5.5l8 8M8.500.5l-8 8" /></svg>
);
const Dash = ({ c }: { c: string }) => (
  <svg width="7" height="12" viewBox="0 0 7 12"><path d="M0 9h7v2H0z" fill={c} /></svg>
);

const menu: [number, number, string][] = [
  [18, 24, "插入"], [30, 48, "页面布局"], [30, 24, "引用"], [30, 24, "邮件"], [30, 24, "审阅"], [30, 24, "视图"], [30, 48, "开发工具"], [30, 39, "AI 助手"],
];
const status: [number, number, string][] = [
  [33, 23, "1 页"], [33, 23, "1 节"], [42, 19, "1/5"], [49, 51, "字数: 560"], [26, 92, "位置 : 14.16 厘米"], [54, 28.500, "31 行"], [29.500, 29.500, "10 列"], [30, 24, "改写"], [14, 24, "修订"], [24, 48, "拼写检查"],
];
const hNums = Array.from({ length: 41 }, (_, i) => (i - 2) * 2);
const vNums = Array.from({ length: 20 }, (_, i) => (i - 1) * 2);

export default function App() {
  return (
    <>
      <Global />
      <Screen>
        <TitleBar>
          <Gap $w={14} />
          <Brand w={51}>YOZO</Brand>
          <Gap $w={10} />
          <HomeLabel w={27}>首页</HomeLabel>
          <AppTab>
            <WBadge s={16} />
            <Gap $w={4} />
            <UIText w={48}>文字处理</UIText>
            <Gap $w={24} />
            <Cross c="#888" s={8} />
          </AppTab>
          <Grow />
          <UIText w={53} $c="#fff">登录/注册</UIText>
          <Gap $w={3} />
          <svg width="16" height="16" viewBox="0 0 16 16">
            <circle cx="8" cy="8" r="7.400" fill="none" stroke="#fff" />
            <path d="M8 2.500c2 0 3 1.500 3 3.500 0 1.700-.6 2.700-1.300 3.500 0 1.500 1.300 1.800 2.300 2.600L11 15H5l-1-2.900c1-.8 2.300-1.100 2.300-2.600C5.600 8.700 5 7.700 5 6c0-2 1-3.500 3-3.500z" fill="#fff" />
          </svg>
          <Gap $w={23} />
          <Dash c="#fff" />
          <Gap $w={24} />
          <Restore c="#fff" />
          <Gap $w={21} />
          <Cross c="#fff" s={10} />
          <Gap $w={11} />
        </TitleBar>

        <MenuBar>
          <MenuItem $ml={18}><UIText w={24}>文件</UIText></MenuItem>
          <MenuItem $ml={21} $on><UIText w={24} $c="#fff">开始</UIText></MenuItem>
          {menu.map(([ml, w, t]) => (
            <MenuItem key={t} $ml={ml}><UIText w={w}>{t}</UIText></MenuItem>
          ))}
          <Grow />
          <svg width="15" height="13" viewBox="0 0 15 13" fill="none" stroke="#808080"><path d="M0 1h15" strokeWidth="2" /><path d="M1 5l6.500 6.500L14 5z" strokeWidth="1.100" /></svg>
          <Gap $w={8} />
          <svg width="10" height="15" viewBox="0 0 10 15" fill="none" stroke="#888" strokeWidth="1.200"><path d="M.8 4.200C.8 2 2.500.8 5 .8s4.200 1.300 4.200 3.400c0 3-4.200 3-4.200 6.800M5 13v1.800" /></svg>
          <Gap $w={10} />
          <Dash c="#888" />
          <Gap $w={12} />
          <Restore c="#888" />
          <Gap $w={9} />
          <Cross c="#777" w={2} />
          <Gap $w={6} />
        </MenuBar>

        <ToolBar>
          <Gap $w={9} />
          <svg width="14" height="14" viewBox="0 0 14 14" fill="none" stroke="#a5a5a5" strokeWidth="1.300"><path d="M1 .5V6h5.500M1.200 5.500C3 2.500 6 1.500 9 2.500c4 1.300 5 5.500 2 8L7.500 13.500" /></svg>
          <Gap $w={7} />
          <Caret c="#a9b4c6" />
          <Gap $w={7} />
          <svg width="14" height="14" viewBox="0 0 14 14" fill="none" stroke="#a5a5a5" strokeWidth="1.300"><path d="M13 .5V6H7.500M12.800 5.500C11 2.500 8 1.500 5 2.500c-4 1.300-5 5.500-2 8l3.500 3" /></svg>
          <Gap $w={7} />
          <Caret c="#a9b4c6" />
          <Gap $w={8} />
          <svg width="15" height="16" viewBox="0 0 15 16" fill="none" stroke="#555" strokeWidth="1.300"><path d="M3 15H1V1h8.500L13 4.500V8M9 1v4h4" /><circle cx="8" cy="9" r="3.500" /><path d="M10.500 11.500L14 15.500" strokeWidth="1.700" /></svg>
          <Gap $w={8} />
          <svg width="15" height="15" viewBox="0 0 15 15" fill="none" stroke="#555" strokeWidth="1.300"><path d="M1 1h13v13H3L1 12zM4 1v8h7V1M3.500 12h7" /></svg>
          <Gap $w={11} />
          <svg width="7" height="8" viewBox="0 0 7 8"><path d="M0 0h7v1.200H0zM0 4h7L3.500 7.500z" fill="#111" /></svg>
          <Gap $w={8} />
          <DocTab>
            <svg width="15" height="16" viewBox="0 0 15 16" fill="none"><path d="M3 4V1h7.500L14 4.500V15H3v-2M10 1v4h4" stroke="#777" strokeWidth="1.200" /><rect y="4" width="9" height="9" fill="#4a86dc" /><path d="M2 6v4l1.500 1L4.500 9l1 2L7 10V6M4.500 6v3" stroke="#fff" /></svg>
            <Gap $w={6} />
            <UIText w={48}>一线精炼</UIText>
            <Grow />
            <Cross c="#888" s={8} />
          </DocTab>
          <Gap $w={6} />
          <svg width="16" height="17" viewBox="0 0 16 17" fill="none"><path d="M3 8v8h11V5l-3-3H8M10.500 2v3.500H14" stroke="#666" strokeWidth="1.200" /><path d="M0 4.500h8M4 .5v8" stroke="#f0a032" strokeWidth="2.400" /><path d="M1.500 4.500h5M4 2v5" stroke="#fff3c8" /></svg>
          <Gap $w={7} />
          <Caret c="#111" />
        </ToolBar>

        <Workspace>
          <TabCorner>
            <svg width="15" height="16" viewBox="0 0 15 16" fill="none"><rect x=".5" y=".5" width="14" height="15" fill="#fff" stroke="#777" /><path d="M5 5v7h6" stroke="#111" strokeWidth="2.200" /></svg>
          </TabCorner>
          <HRuler>
            {hNums.map((n) => (
              <HCell key={n}>{n === 0 ? "" : n === 36 ? "3\u2007" : Math.abs(n)}</HCell>
            ))}
            <IndentMark $x={473} $y={6}>
              <svg width="9" height="21" viewBox="0 0 9 21" fill="#e8edf3" stroke="#8792a3"><path d="M.5.5h8v3l-3.500 4 3.500 4v2.500h-8V11.500l3.500-4-3.500-4zM.5 14h8v6h-8z" /><path d="M.5 17h8" /></svg>
            </IndentMark>
            <IndentMark $x={872} $y={13}>
              <svg width="9" height="8" viewBox="0 0 9 8" fill="#e8edf3" stroke="#8792a3"><path d="M4.500 1l4 3.500v3h-8v-3z" /></svg>
            </IndentMark>
          </HRuler>
          <PinButton>
            <svg width="12" height="17" viewBox="0 0 12 17"><path d="M6 0a5.500 5.500 0 0 1 5.500 5.700C11.500 9.500 7.500 12 6 17 4.500 12 .5 9.500.5 5.700A5.500 5.500 0 0 1 6 0zm0 3a2.600 2.600 0 1 0 0 5.200A2.600 2.600 0 0 0 6 3z" fill="#2f8bf0" fillRule="evenodd" /></svg>
          </PinButton>
          <ScrollCol>
            <Split />
            <svg width="8" height="16" viewBox="0 0 8 16"><path d="M0 11l4-5 4 5z" fill="#aaa" /></svg>
            <Thumb>
              <Grip />
              <SpeedPill />
            </Thumb>
            <Grow />
            <svg width="14" height="62" viewBox="0 0 14 62" fill="none">
              <path d="M3 5h8l-4 6z" fill="#a0a0a0" />
              <g stroke="#3a78c8" strokeWidth="1.100"><path d="M7 19l3.500 4h-7zM7 25l3.500 4h-7z" /><circle cx="7" cy="38" r="3.800" /><path d="M3.500 49h7L7 53zM3.500 57L7 53l3.500 4z" /></g>
            </svg>
          </ScrollCol>
          <VRuler>
            {vNums.map((n) => (
              <VCell key={n}><span>{n === 0 ? "" : Math.abs(n)}</span></VCell>
            ))}
          </VRuler>
          <Canvas>
            <Sheets>
              <SheetView x={57} y={127} left={p1a} right={p1b} />
              <SheetView x={972} y={127} left={p2a} right={p2b} />
              <SheetView x={57} y={778} left={p3a} right={p3b} />
              <SheetView x={972} y={778} left={p4a} right={p4b} />
            </Sheets>
          </Canvas>
          <Watermark>
            <WaterBig w={133}>激活 Windows</WaterBig>
            <WaterSmall w={196}>转到"设置"以激活 Windows。</WaterSmall>
          </Watermark>
        </Workspace>

        <StatusBar>
          {status.map(([ml, w, t]) => (
            <React.Fragment key={t}>
              <Gap $w={ml} />
              <StatusText w={w} $c="#444">{t}</StatusText>
            </React.Fragment>
          ))}
          <Gap $w={974} />
          <ViewButton $on><svg width="12" height="12" viewBox="0 0 12 12" fill="none" stroke="#333"><path d="M.5.500h11v11H.500zM2.500 3h7M2.500 5h7M2.500 7h7M2.500 9h7" /></svg></ViewButton>
          <ViewButton><svg width="12" height="12" viewBox="0 0 12 12" fill="none" stroke="#555"><path d="M.500.500h11v11H.500zM2.500 3h4M4.500 5h5M4.500 7h5M4.500 9h5M2.500 5h1" /></svg></ViewButton>
          <ImeBar>
            <ImeLogo width="32" height="30" viewBox="0 0 32 30"><path d="M2 5Q1 2 5 2L23 0q3 0 4 3l4 20q1 4-3 5l-18 2q-3 0-4-3z" fill="#f4581c" /><path d="M23 6.500C17 5 9.500 6 10 10.500c.5 4 13 2.500 13.500 7.500.5 4.500-7 6-14 4" fill="none" stroke="#fff" strokeWidth="4" /></ImeLogo>
            <ImeTray>
              <ImeGlyph>中</ImeGlyph>
              <svg width="14" height="14" viewBox="0 0 14 14" fill="none" stroke="#1173d4" strokeWidth="1.600"><circle cx="3.500" cy="4" r="2" /><path d="M10 7.500v2q0 2-2 3" strokeWidth="2.200" /></svg>
              <svg width="13" height="16" viewBox="0 0 13 16" fill="none" stroke="#1173d4" strokeWidth="1.600"><rect x="4" y="1" width="5" height="8" rx="2.500" fill="#1173d4" /><path d="M1.500 7q0 5 5 5t5-5M6.500 12v3" /></svg>
              <svg width="15" height="13" viewBox="0 0 15 13" fill="none" stroke="#1173d4" strokeWidth="1.400"><rect x=".7" y=".7" width="13.600" height="11.600" rx="1.500" /><path d="M3 4h9M3 6.500h9M5 9.500h5" strokeDasharray="2 1.300" strokeWidth="1.600" /></svg>
              <svg width="17" height="15" viewBox="0 0 17 15"><path d="M5 0q3.500 3 7 0l5 3-2 4-2-1v9H4V6L2 7 0 3z" fill="#1173d4" /></svg>
              <svg width="14" height="14" viewBox="0 0 14 14" fill="#1173d4"><rect width="6.300" height="6.300" rx="1.500" /><circle cx="11" cy="3.200" r="3" /><rect y="7.700" width="6.300" height="6.300" rx="1.500" /><rect x="7.700" y="7.700" width="6.300" height="6.300" rx="1.500" /></svg>
            </ImeTray>
          </ImeBar>
        </StatusBar>

        <TaskBar>
          <Start>
            <svg width="17" height="16" viewBox="0 0 17 16" fill="#fff"><path d="M0 2.300L7 1.300v6.300H0zM8 1.200L17 0v7.600H8zM0 8.600h7v6.200L0 13.800zM8 8.600h9V16l-9-1.300z" /></svg>
          </Start>
          <Task $w={160} $on>
            <svg width="22" height="22" viewBox="0 0 22 22" fill="none"><rect width="22" height="22" rx="4" fill="#0a9dce" /><ellipse cx="11" cy="11.500" rx="5" ry="7" stroke="#fff" strokeWidth="2.300" /><path d="M14 2q-4 1-3 6 1 4 2 6" stroke="#0a9dce" strokeWidth="1.500" /><path d="M15 3q-3 2-2 6" stroke="#fff" strokeWidth="1.200" /></svg>
            <UIText w={58} $c="#fff">永中Office</UIText>
          </Task>
          <Task $w={152} $ml={5}>
            <svg width="24" height="24" viewBox="0 0 24 24"><rect width="24" height="24" rx="5" fill="#fff" /><path d="M13 3L4 14h7z" fill="#3b7bf6" /><path d="M10 21l10-11h-7z" fill="#27c8e8" /><path d="M13 3l-2 7h2l-3 11 1-7H4z" fill="#4c65f5" /></svg>
            <UIText w={49} $c="#fff">极连快传</UIText>
          </Task>
          <Task $w={152} $ml={9}>
            <svg width="24" height="24" viewBox="0 0 24 24"><circle cx="12" cy="12" r="12" fill="#fbc116" /><path d="M12 12L1.600 6A12 12 0 0 1 22.400 6z" fill="#e33b2e" /><path d="M12 12L1.600 6A12 12 0 0 0 12 24l5.200-9z" fill="#2da94f" /><path d="M12 6h10.400A12 12 0 0 0 1.600 6l5.200 9z" fill="#e33b2e" /><circle cx="12" cy="12" r="5.800" fill="#fff" /><circle cx="12" cy="12" r="4.600" fill="#3f7de8" /></svg>
            <UIText w={107} $c="#fff">撰写新文章 - Goo...</UIText>
          </Task>
          <Grow />
          <Tray>
            <svg width="12" height="8" viewBox="0 0 12 8" fill="none" stroke="#fff" strokeWidth="1.300"><path d="M.5 7L6 1.200 11.500 7" /></svg>
            <Gap $w={10} />
            <svg width="17" height="15" viewBox="0 0 17 15" fill="none" stroke="#fff" strokeWidth="1.100"><path d="M5 1h11v9H5M.6 1h4.400v5H.600zM3 6v4.500h2M10 10v4M6 14h8" /></svg>
            <Gap $w={7} />
            <svg width="16" height="16" viewBox="0 0 16 16" fill="none"><path d="M.6 6h2.500L7 2v12L3.100 10H.600z" stroke="#fff" /><circle cx="11.500" cy="11" r="4.500" fill="#e02f2f" /><path d="M9.700 9.200l3.600 3.600M13.300 9.200l-3.600 3.600" stroke="#fff" strokeWidth="1.200" /></svg>
            <Gap $w={8} />
            <UIText w={13} $s={13} $c="#fff">中</UIText>
            <Gap $w={11} />
            <Clock>
              <UIText w={59} $c="#fff">12:34 周六</UIText>
              <UIText w={59} $c="#fff">2023/6/10</UIText>
            </Clock>
            <Gap $w={18} />
            <svg width="28" height="30" viewBox="0 0 28 30"><path d="M1 2h16v13H8l-3 3v-3H1z" fill="#fff" /><path d="M4 5.500h10M4 8.500h10M4 11.500h7" stroke="#1a2947" strokeWidth="1.300" /><circle cx="16" cy="20" r="9.500" fill="#33373f" stroke="#9aa" /><text x="16" y="24.500" fontSize="12" fontWeight="600" textAnchor="middle" fontFamily="Open Sans" fill="#fff">15</text></svg>
            <Gap $w={14} />
          </Tray>
        </TaskBar>
      </Screen>
    </>
  );
}
